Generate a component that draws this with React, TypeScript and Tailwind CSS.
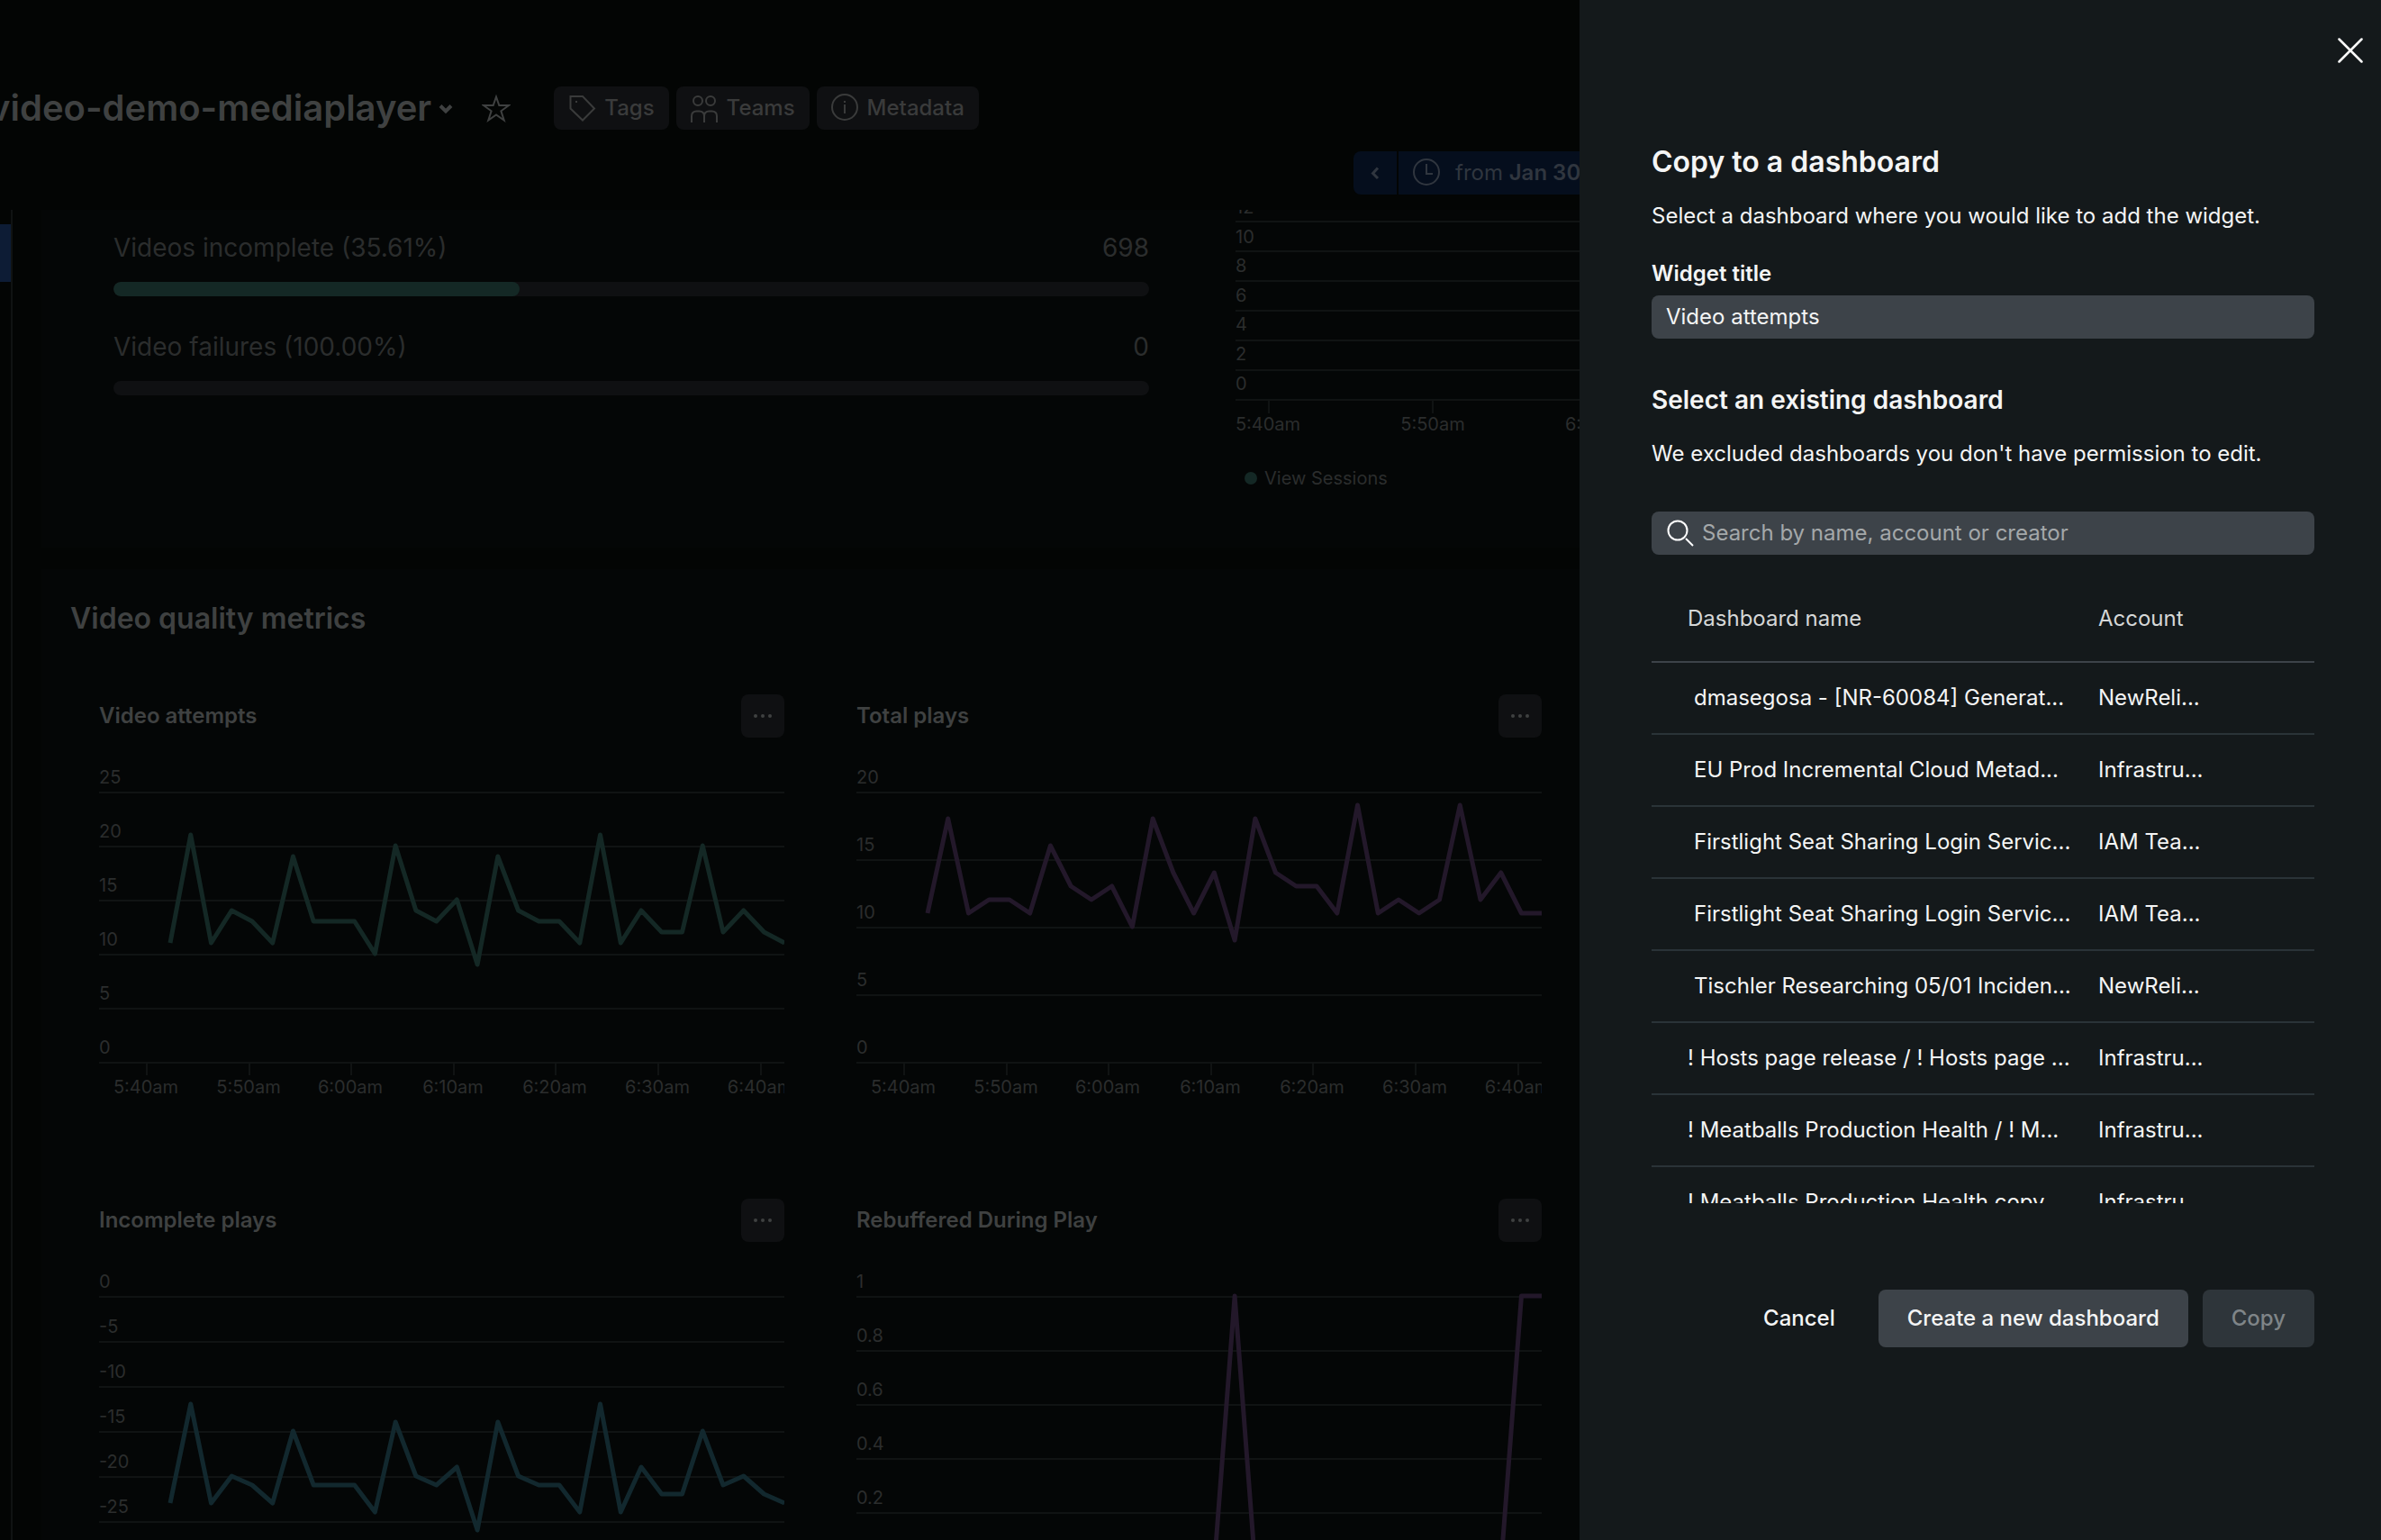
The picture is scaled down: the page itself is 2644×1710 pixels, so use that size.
import type { ReactNode } from "react";

const SERIES_STEP = 22.74;
const TIMES = ["5:40am", "5:50am", "6:00am", "6:10am", "6:20am", "6:30am", "6:40am"];

type Chart = {
  title: string;
  labels: string[];
  step: number;
  unit: number;
  top: number;
  stroke: string;
  data: number[];
};

const CHARTS: Chart[] = [
  {
    title: "Video attempts",
    labels: ["25", "20", "15", "10", "5", "0"],
    step: 60,
    unit: 12,
    top: 25,
    stroke: "#142825",
    data: [11, 21, 11, 14, 13, 11, 19, 13, 13, 13, 10, 20, 14, 13, 15, 9, 19, 14, 13, 13, 11, 21, 11, 14, 12, 12, 20, 12, 14, 12, 11],
  },
  {
    title: "Total plays",
    labels: ["20", "15", "10", "5", "0"],
    step: 75,
    unit: 15,
    top: 20,
    stroke: "#23182a",
    data: [11, 18, 11, 12, 12, 11, 16, 13, 12, 13, 10, 18, 14, 11, 14, 9, 18, 14, 13, 13, 11, 19, 11, 12, 11, 12, 19, 12, 14, 11, 11],
  },
  {
    title: "Incomplete plays",
    labels: ["0", "-5", "-10", "-15", "-20", "-25", "-30"],
    step: 50,
    unit: 10,
    top: 0,
    stroke: "#12282e",
    data: [-23, -12, -23, -20, -21, -23, -15, -21, -21, -21, -24, -14, -20, -21, -19, -26, -14, -20, -21, -21, -24, -12, -24, -19, -22, -22, -15, -21, -20, -22, -23],
  },
  {
    title: "Rebuffered During Play",
    labels: ["1", "0.8", "0.6", "0.4", "0.2", "0"],
    step: 60,
    unit: 300,
    top: 1,
    stroke: "#23182a",
    data: [0, 0, 0, 0, 0, 0, 0, 0, 0, 0, 0, 0, 0, 0, 0, 1, 0, 0, 0, 0, 0, 0, 0, 0, 0, 0, 0, 0, 0, 1, 1],
  },
];

const ROWS = [
  { name: "dmasegosa - [NR-60084] Generat...", account: "NewReli...", indented: true },
  { name: "EU Prod Incremental Cloud Metad...", account: "Infrastru...", indented: true },
  { name: "Firstlight Seat Sharing Login Servic...", account: "IAM Tea...", indented: true },
  { name: "Firstlight Seat Sharing Login Servic...", account: "IAM Tea...", indented: true },
  { name: "Tischler Researching 05/01 Inciden...", account: "NewReli...", indented: true },
  { name: "! Hosts page release / ! Hosts page ...", account: "Infrastru...", indented: false },
  { name: "! Meatballs Production Health / ! M...", account: "Infrastru...", indented: false },
  { name: "! Meatballs Production Health copy...", account: "Infrastru...", indented: false },
];

function LineChart({ chart }: { chart: Chart }) {
  const bottom = 28 + (chart.labels.length - 1) * chart.step;
  const points = chart.data
    .map((v, i) => `${79 + i * SERIES_STEP},${27 + (chart.top - v) * chart.unit}`)
    .join(" ");
  return (
    <svg className="mt-[33px] block h-[380px] w-full overflow-hidden" role="img" aria-label={chart.title}>
      {chart.labels.map((label, i) => (
        <g key={label}>
          <rect x="0" y={27 + i * chart.step} width="100%" height="2" fill="#101313" />
          <text x="0" y={18 + i * chart.step} fontSize="20" fill="#2b2d2d">{label}</text>
        </g>
      ))}
      {TIMES.map((time, i) => (
        <g key={time}>
          <rect x={52 + Math.round(i * 113.6)} y={bottom} width="2" height="14" fill="#101313" />
          <text x={52 + Math.round(i * 113.6)} y={bottom + 34} fontSize="20" textAnchor="middle" fill="#2b2d2d">{time}</text>
        </g>
      ))}
      <polyline points={points} fill="none" stroke={chart.stroke} strokeWidth="5" strokeLinejoin="round" />
    </svg>
  );
}

function SessionsChart() {
  return (
    <svg className="block h-[252px] w-full overflow-hidden" role="img" aria-label="View Sessions over time">
      {["12", "10", "8", "6", "4", "2", "0"].map((label, i) => (
        <g key={label}>
          <rect x="0" y={12 + i * 33} width="100%" height="2" fill="#101313" />
          <text x="0" y={4 + Math.round(i * 32.6)} fontSize="20" fill="#2b2d2d">{label}</text>
        </g>
      ))}
      {["5:40am", "5:50am", "6:00am"].map((time, i) => (
        <g key={time}>
          <rect x={36 + i * 182} y="212" width="2" height="14" fill="#101313" />
          <text x={36 + i * 183} y="245" fontSize="20" textAnchor="middle" fill="#2b2d2d">{time}</text>
        </g>
      ))}
    </svg>
  );
}

function Widget({ chart }: { chart: Chart }) {
  return (
    <article className="h-[560px] min-w-0">
      <div className="flex h-12 items-center justify-between">
        <h3 className="text-2xl font-semibold text-[#3f4141]">{chart.title}</h3>
        <button type="button" aria-label={`${chart.title} options`} className="flex size-12 items-center justify-center gap-1 rounded-lg bg-[#0f1012]">
          <span className="size-1 rounded-full bg-[#3f4141]" />
          <span className="size-1 rounded-full bg-[#3f4141]" />
          <span className="size-1 rounded-full bg-[#3f4141]" />
        </button>
      </div>
      <LineChart chart={chart} />
    </article>
  );
}

function Progress({ label, value, percent }: { label: string; value: string; percent: number }) {
  return (
    <div>
      <div className="flex items-center justify-between text-[28px] leading-10 text-[#2b2d2d]">
        <span>{label}</span>
        <span>{value}</span>
      </div>
      <div className="mt-[18px] h-4 overflow-hidden rounded-lg bg-[#0f1012]">
        <div className="h-4 rounded-lg bg-[#142825]" style={{ width: `${percent}%` }} />
      </div>
    </div>
  );
}

function Icon({ children }: { children: ReactNode }) {
  return (
    <svg width="32" height="32" viewBox="0 0 32 32" fill="none" stroke="currentColor" strokeWidth="2" className="shrink-0" aria-hidden="true">
      {children}
    </svg>
  );
}

function Chip({ label, children }: { label: string; children: ReactNode }) {
  return (
    <button type="button" className="flex h-12 shrink-0 items-center gap-2 rounded-lg bg-[#0f1012] px-4 text-2xl font-medium text-[#3a3b3b]">
      <Icon>{children}</Icon>
      {label}
    </button>
  );
}

function Header() {
  return (
    <header className="shrink-0 pb-[17px] pt-24">
      <div className="flex h-12 items-center">
        <h1 className="-ml-3 text-[40px] font-semibold leading-12 text-[#3f4141]">video-demo-mediaplayer</h1>
        <svg className="ml-2 mt-0.5 shrink-0" width="16" height="12" viewBox="0 0 16 12" fill="none" stroke="#3f4141" strokeWidth="4" aria-hidden="true">
          <path d="M2 2.500l6 6 6-6" />
        </svg>
        <button type="button" aria-label="Add to favorites" className="ml-8 text-[#3f4141]">
          <Icon>
            <path d="M16 3.500l3.300 9.500H30l-8.600 6.300L24.700 29.500 16 23.400 7.300 29.500l3.300-10.200L2 13h10.700z" />
          </Icon>
        </button>
        <div className="ml-12 flex gap-2">
          <Chip label="Tags">
            <path d="M2.500 3h13.500l13 13.500-13 13-13.500-13z" />
            <path d="M8 9h2" />
          </Chip>
          <Chip label="Teams">
            <circle cx="8" cy="8" r="5" />
            <circle cx="22" cy="8" r="5" />
            <path d="M1 32v-7c0-3.500 2-5.500 5.500-5.500h3c3.500 0 5.500 2 5.500 5.500v7M15 25c0-3.500 2-5.500 5.500-5.500h3c3.500 0 5.500 2 5.500 5.500v7" />
          </Chip>
          <Chip label="Metadata">
            <circle cx="15" cy="15" r="14" />
            <path d="M15 12v10M15 8v2" />
          </Chip>
        </div>
      </div>
      <div className="mt-6 flex h-12 justify-end gap-0.5 text-2xl text-[#30363f]">
        <button type="button" aria-label="Previous period" className="flex w-12 items-center justify-center rounded-l-lg bg-[#050e1d]">
          <svg width="10" height="16" viewBox="0 0 10 16" fill="none" stroke="currentColor" strokeWidth="3" aria-hidden="true">
            <path d="M8 2.500L2.500 8.500l5.500 5.500" />
          </svg>
        </button>
        <button type="button" className="flex w-[201px] items-center overflow-hidden whitespace-nowrap bg-[#050e1d] pl-[15px]">
          <Icon>
            <circle cx="16" cy="15" r="14" />
            <path d="M16 6v11h7" />
          </Icon>
          <span className="ml-4">
            from <b className="font-semibold">Jan 30</b>
          </span>
        </button>
      </div>
    </header>
  );
}

function Drawer() {
  return (
    <aside className="relative flex w-[890px] shrink-0 flex-col bg-[#14191b] pl-20 pr-[74px] pt-40 text-2xl text-[#f4f5f5]">
      <button type="button" aria-label="Close" className="absolute right-5 top-[42px]">
        <svg width="28" height="28" viewBox="0 0 28 28" fill="none" stroke="#fff" strokeWidth="2.500" strokeLinecap="round" aria-hidden="true">
          <path d="M1.500 1.500l25 25M26.500 1.500l-25 25" />
        </svg>
      </button>
      <h2 className="text-[32px] font-semibold leading-10">Copy to a dashboard</h2>
      <p className="mt-6 leading-8">Select a dashboard where you would like to add the widget.</p>
      <label htmlFor="widget-title" className="mt-8 font-semibold leading-8">Widget title</label>
      <input id="widget-title" defaultValue="Video attempts" className="mt-2 h-12 shrink-0 rounded-lg bg-[#3d4349] px-4 pb-0.5 outline-none" />
      <h3 className="mt-[50px] text-[28px] font-semibold leading-9">Select an existing dashboard</h3>
      <p className="mt-[26px] leading-8">We excluded dashboards you don't have permission to edit.</p>
      <label className="mt-12 flex h-12 shrink-0 items-center gap-2 rounded-lg bg-[#3d4349] pl-4">
        <svg width="32" height="32" viewBox="0 0 32 32" fill="none" stroke="#fff" strokeWidth="2" className="shrink-0" aria-hidden="true">
          <circle cx="13" cy="13" r="10.500" />
          <path d="M22 22l8 8" />
        </svg>
        <input type="search" aria-label="Search dashboards" placeholder="Search by name, account or creator" className="h-12 min-w-0 flex-1 bg-transparent pb-0.5 outline-none placeholder:text-[#a4a8aa]" />
      </label>
      <div className="mt-[23px] h-[697px] shrink-0 overflow-hidden">
        <table className="w-full table-fixed border-collapse text-left">
          <thead>
            <tr className="h-24 border-b-2 border-[#3d4349] text-[#d5d7d7]">
              <th className="w-[496px] pl-10 font-normal">Dashboard name</th>
              <th className="font-normal">Account</th>
            </tr>
          </thead>
          <tbody>
            {ROWS.map((row, i) => (
              <tr key={i} className="h-20 border-b-2 border-[#2a3338]">
                <td className={row.indented ? "whitespace-nowrap pl-[47px]" : "whitespace-nowrap pl-10"}>{row.name}</td>
                <td>{row.account}</td>
              </tr>
            ))}
          </tbody>
        </table>
      </div>
      <div className="mt-24 flex h-16 shrink-0 justify-end gap-4 font-medium">
        <button type="button" className="px-8">Cancel</button>
        <button type="button" className="rounded-lg bg-[#3d4349] px-8">Create a new dashboard</button>
        <button type="button" disabled className="rounded-lg bg-[#2e353a] px-8 text-[#7f8588]">Copy</button>
      </div>
    </aside>
  );
}

export default function App() {
  return (
    <div className="flex h-screen overflow-hidden bg-[#030504] font-[Inter,sans-serif]">
      <main className="flex min-w-0 flex-1 flex-col overflow-hidden">
        <Header />
        <div className="flex min-h-0 flex-1">
          <nav aria-label="Sections" className="w-[14px] shrink-0 border-r-2 border-[#101313] pt-4">
            <div className="h-16 bg-[#0d1c35]" />
          </nav>
          <div className="min-w-0 flex-1 overflow-hidden pl-8">
            <section className="flex h-[375px] gap-24 bg-[#040606] pl-20">
              <div className="min-w-0 flex-1 space-y-9 pt-[22px]">
                <Progress label="Videos incomplete (35.61%)" value="698" percent={39.2} />
                <Progress label="Video failures (100.00%)" value="0" percent={0} />
              </div>
              <div className="w-[382px] shrink-0">
                <SessionsChart />
                <div className="mt-8 flex items-center gap-2 pl-2.5 text-xl text-[#2b2d2d]">
                  <span className="size-3.5 rounded-full bg-[#142825]" />
                  View Sessions
                </div>
              </div>
            </section>
            <section className="mt-6 bg-[#040606] pt-[35px]">
              <h2 className="pl-8 text-[32px] font-semibold leading-10 text-[#3f4141]">Video quality metrics</h2>
              <div className="mt-16 grid grid-cols-2 gap-x-20 pl-16 pr-[42px]">
                {CHARTS.map((chart) => (
                  <Widget key={chart.title} chart={chart} />
                ))}
              </div>
            </section>
          </div>
        </div>
      </main>
      <Drawer />
    </div>
  );
}
